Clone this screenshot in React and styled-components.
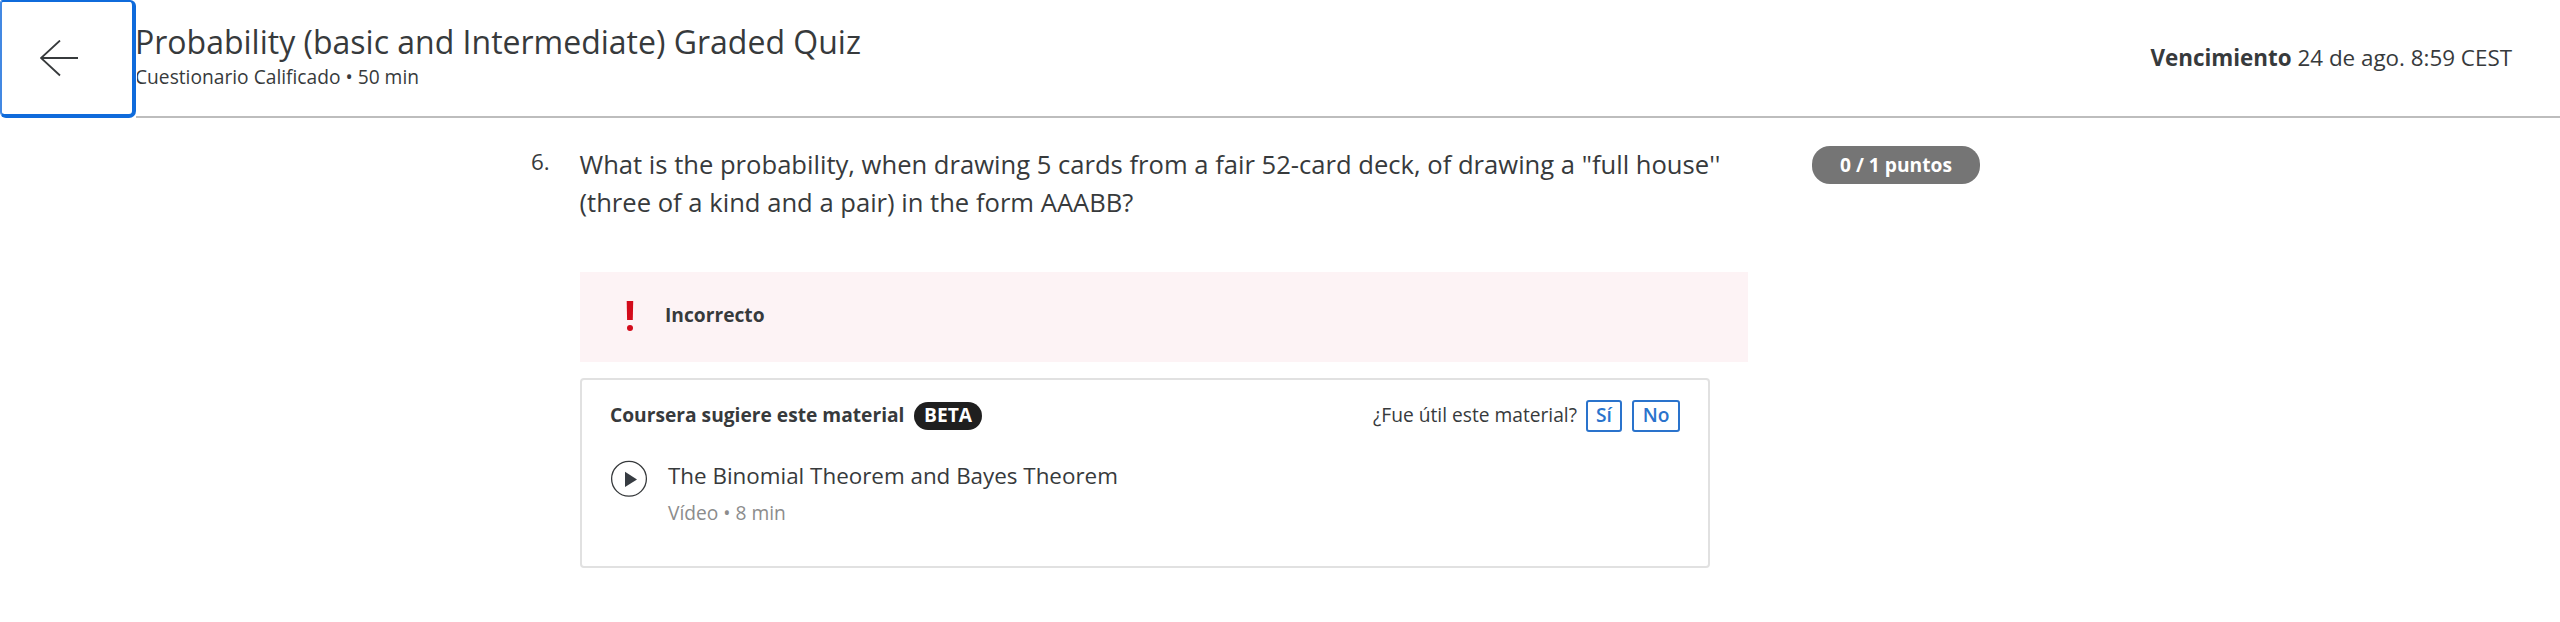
import React from "react";
import styled, { createGlobalStyle } from "styled-components";

const GlobalStyle = createGlobalStyle`
  * { box-sizing: border-box; }
  body {
    margin: 0;
    background: #fff;
    color: #373a3c;
    font-family: "Open Sans", sans-serif;
    font-size: 19.2px;
    line-height: 27px;
  }
  h1, h2, p { margin: 0; font-weight: 400; }
  svg { display: block; flex: none; }
`;

const Header = styled.header`
  display: flex;
  height: 118px;
  white-space: nowrap;
`;

const BackButton = styled.button`
  position: relative;
  z-index: 1;
  display: flex;
  align-items: flex-start;
  flex: none;
  width: 136px;
  height: 118px;
  padding: 38px 0 0 38px;
  background: #fff;
  border: solid #0f6bdb;
  border-width: 2px 4px 4px 2px;
  border-left-color: #4388e2;
  border-radius: 3px 6px 7px 6px;
  box-shadow: 1px 0 0 #fff;
  color: #373a3c;
`;

const HeaderBar = styled.div`
  flex: 1;
  display: flex;
  justify-content: space-between;
  padding-right: 48px;
  border-bottom: 2px solid #bdbdbd;
`;

const Heading = styled.div`
  margin-left: -1px;
  padding-top: 20px;
`;

const Title = styled.h1`
  font-size: 32px;
  line-height: 43px;
`;

const DueDate = styled.p`
  padding-top: 42px;
  font-size: 22.4px;
  line-height: 31px;
`;

const Question = styled.main`
  display: flex;
  padding: 28px 0 0 531px;
`;

const QuestionNumber = styled.div`
  flex: none;
  width: 49px;
  font-size: 22.4px;
  line-height: 31px;
`;

const QuestionBody = styled.section`
  flex: none;
  width: 1168px;
`;

const Prompt = styled.p`
  height: 126px;
  margin-left: -0.5px;
  font-size: 25.6px;
  line-height: 38.4px;
`;

const Feedback = styled.div`
  display: flex;
  height: 90px;
  padding: 29px 0 0 46px;
  gap: 31px;
  background: #fdf3f5;
`;

const FeedbackLabel = styled.p`
  && { font-weight: 700; }
`;

const Points = styled.div`
  flex: none;
  height: 38px;
  margin-left: 64px;
  padding: 5px 28px;
  border-radius: 18px;
  background: #757575;
  color: #fff;
  font-weight: 700;
  white-space: nowrap;
`;

const Card = styled.article`
  width: 1130px;
  height: 190px;
  margin-top: 16px;
  padding: 20px 28px 0;
  border: 2px solid #e1e1e1;
  border-radius: 4px;
`;

const CardHeader = styled.div`
  display: flex;
  justify-content: space-between;
  height: 60px;
`;

const CardTitle = styled.h2`
  display: flex;
  gap: 9.6px;
  padding-top: 1px;
  font-size: 19.2px;
  font-weight: 700;
`;

const BetaBadge = styled.span`
  height: 28px;
  margin-top: 1px;
  padding: 0 10px;
  border-radius: 14px;
  background: #1f1f1f;
  color: #fff;
  line-height: 25px;
`;

const Survey = styled.div`
  display: flex;
`;

const SurveyLabel = styled.span`
  padding: 1px 9px 0 0;
`;

const AnswerButton = styled.button`
  width: ${(p) => p.$width}px;
  height: 32px;
  margin-left: ${(p) => p.$gap || 0}px;
  padding: 0;
  display: flex;
  justify-content: center;
  align-items: flex-start;
  background: #fff;
  border: 2px solid #2a73cc;
  border-radius: 3px;
  color: #2a73cc;
  font: 600 19.2px/25px "Open Sans", sans-serif;
`;

const Material = styled.div`
  display: flex;
  gap: 20px;
`;

const MaterialName = styled.p`
  font-size: 22.4px;
  line-height: 31px;
`;

const MaterialMeta = styled.p`
  margin-top: 8px;
  color: #8c8c8c;
`;

const ArrowLeftIcon = () => (
  <svg width="40" height="38" viewBox="0 0 40 38" fill="none" stroke="currentColor" strokeWidth="1.8">
    <path d="M38 18H1M20 0.5L1 18L20 35.5" />
  </svg>
);

const ExclamationIcon = () => (
  <svg width="8" height="30" viewBox="0 0 8 30" fill="#d30b1b">
    <path d="M0.7 0H7.2L6.8 19H1.1Z" />
    <circle cx="4" cy="27" r="3" />
  </svg>
);

const PlayIcon = () => (
  <svg width="38" height="38" viewBox="0 0 38 38">
    <circle cx="19" cy="18.8" r="17.4" fill="none" stroke="#373a3c" strokeWidth="1.3" />
    <path d="M15 11.8L27 19.4L15 27Z" fill="#373c42" />
  </svg>
);

export default function App() {
  return (
    <>
      <GlobalStyle />
      <Header>
        <BackButton aria-label="Volver">
          <ArrowLeftIcon />
        </BackButton>
        <HeaderBar>
          <Heading>
            <Title>Probability (basic and Intermediate) Graded Quiz</Title>
            <p>Cuestionario Calificado • 50 min</p>
          </Heading>
          <DueDate>
            <b>Vencimiento</b> 24 de ago. 8:59 CEST
          </DueDate>
        </HeaderBar>
      </Header>
      <Question>
        <QuestionNumber>6.</QuestionNumber>
        <QuestionBody>
          <Prompt>
            What is the probability, when drawing 5 cards from a fair 52-card deck, of drawing a "full house''
            <br />
            (three of a kind and a pair) in the form AAABB?
          </Prompt>
          <Feedback>
            <ExclamationIcon />
            <FeedbackLabel>Incorrecto</FeedbackLabel>
          </Feedback>
          <Card>
            <CardHeader>
              <CardTitle>
                Coursera sugiere este material
                <BetaBadge>BETA</BetaBadge>
              </CardTitle>
              <Survey>
                <SurveyLabel>¿Fue útil este material?</SurveyLabel>
                <AnswerButton $width={36}>Sí</AnswerButton>
                <AnswerButton $width={48} $gap={10}>No</AnswerButton>
              </Survey>
            </CardHeader>
            <Material>
              <PlayIcon />
              <div>
                <MaterialName>The Binomial Theorem and Bayes Theorem</MaterialName>
                <MaterialMeta>Vídeo • 8 min</MaterialMeta>
              </div>
            </Material>
          </Card>
        </QuestionBody>
        <Points>0 / 1 puntos</Points>
      </Question>
    </>
  );
}
